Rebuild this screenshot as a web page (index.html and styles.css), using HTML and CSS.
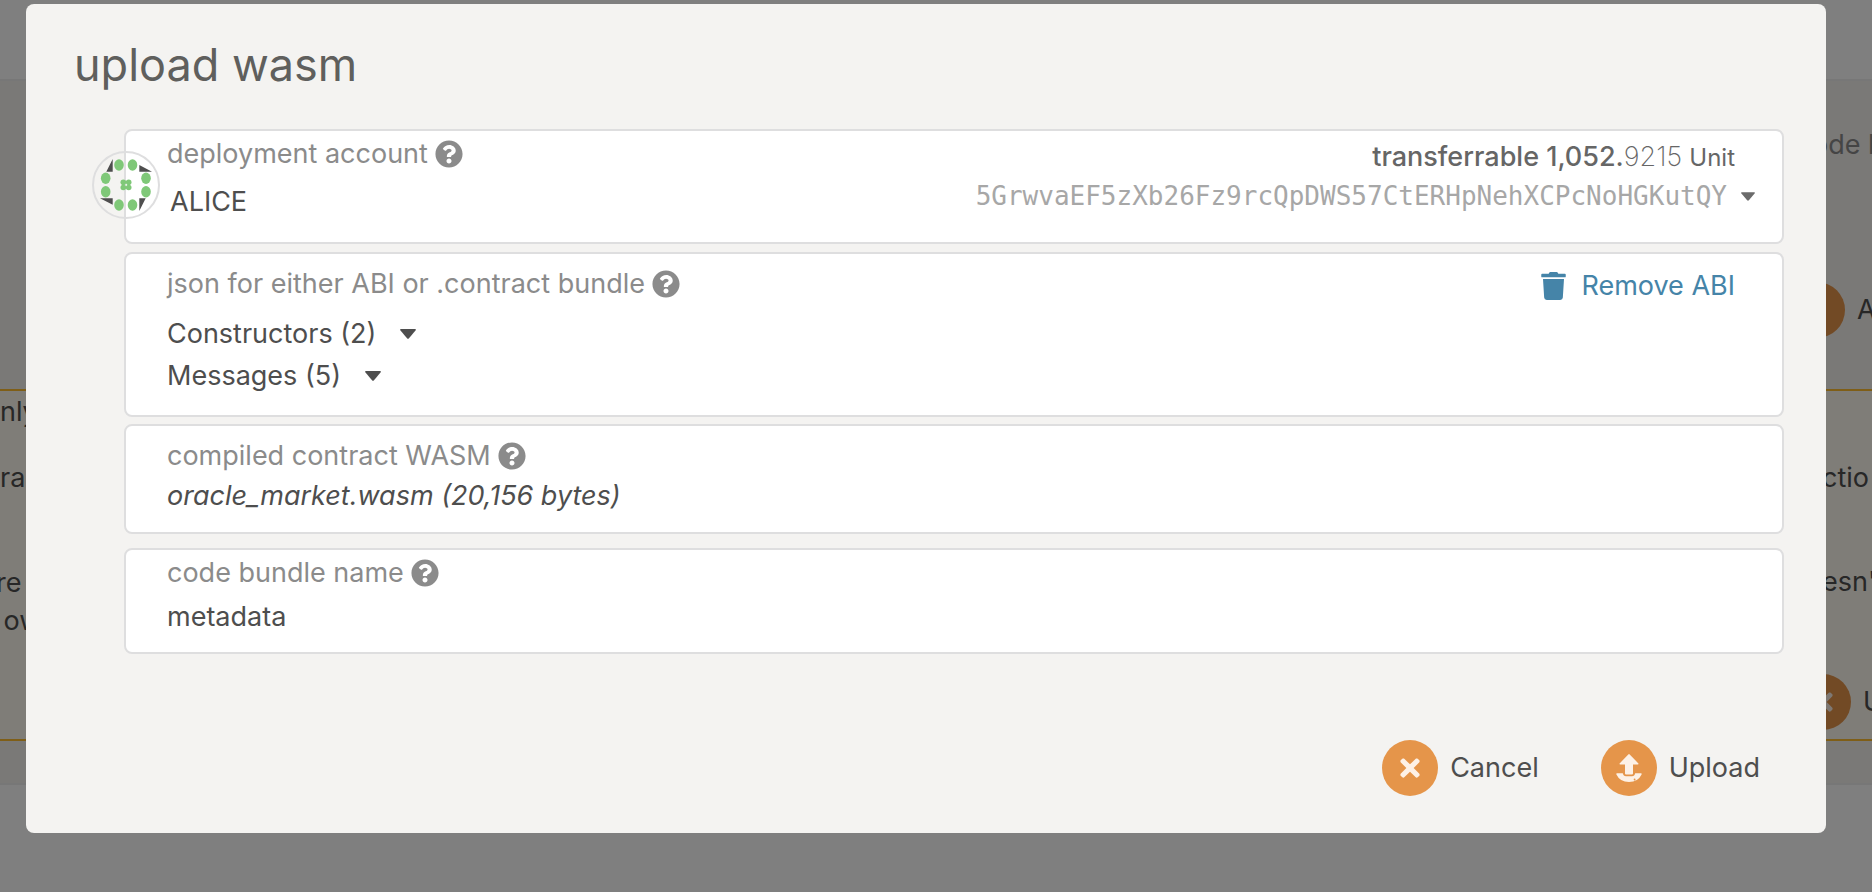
FILE: index.html
```html
<!DOCTYPE html>
<html lang="en">
<head>
<meta charset="utf-8">
<title>upload wasm</title>
<link rel="stylesheet" href="styles.css">
</head>
<body>
<svg class="sprite" aria-hidden="true">
  <symbol id="help" viewBox="0 0 512 512"><path d="M504 256c0 137-111 248-248 248S8 393 8 256C8 119 119 8 256 8s248 111 248 248zM262.700 90c-54.500 0-89.300 23-116.500 63.800-3.500 5.300-2.400 12.400 2.700 16.300l34.700 26.300c5.200 3.900 12.600 3 16.700-2.100 17.900-22.700 30.100-35.800 57.300-35.800 20.400 0 45.700 13.100 45.700 33 0 15-12.400 22.700-32.500 34C247.100 238.500 216 254.900 216 296v4c0 6.600 5.400 12 12 12h56c6.600 0 12-5.400 12-12v-1.300c0-28.500 83.200-29.600 83.200-106.700 0-58-60.200-102-116.500-102zM256 338c-25.400 0-46 20.600-46 46s20.600 46 46 46 46-20.600 46-46-20.600-46-46-46z"/></symbol>
  <symbol id="caret" viewBox="0 0 16 10"><path d="M1 0h14q1.500 0 .5 1.500L9 9.300q-1 1-2 0L.5 1.500Q-.5 0 1 0z"/></symbol>
  <symbol id="times" viewBox="0 0 352 512"><path d="M242.720 256l100.070-100.070c12.280-12.280 12.280-32.190 0-44.480l-22.240-22.240c-12.280-12.280-32.190-12.280-44.480 0L176 189.280 75.930 89.210c-12.280-12.280-32.190-12.280-44.480 0L9.210 111.450c-12.280 12.280-12.280 32.190 0 44.480L109.280 256 9.210 356.070c-12.280 12.280-12.280 32.190 0 44.480l22.240 22.240c12.280 12.280 32.200 12.280 44.480 0L176 322.720l100.070 100.070c12.280 12.280 32.200 12.280 44.480 0l22.240-22.240c12.280-12.280 12.280-32.190 0-44.480L242.720 256z"/></symbol>
</svg>

<div class="page" aria-hidden="true">
  <div class="band top"></div>
  <div class="band head"><span></span><span class="edge muted">ode h</span></div>
  <div class="band action"><span></span><span class="edge"><i class="disc"></i>A</span></div>
  <div class="notes">
    <div class="band note"><span>nly</span><span class="edge"></span></div>
    <div class="band note"><span>ra</span><span class="edge">ctio</span></div>
    <div class="band note outdent"><span>re<br>&nbsp;ow</span><span class="edge">esn'</span></div>
    <div class="band note"><span></span><span class="edge wide"><i class="disc"><svg class="times"><use href="#times"/></svg></i>U</span></div>
  </div>
</div>

<div class="dimmer">
<main class="modal" role="dialog" aria-labelledby="title">
  <h1 class="title" id="title">upload wasm</h1>
  <form class="fields">
    <section class="field account">
      <svg class="identicon" viewBox="0 0 68 68" aria-hidden="true">
        <circle class="ring" cx="34" cy="34" r="33"/>
        <g class="dark"><path d="M20.700 8v12.700h-6.400zM47.300 14v6.700H60zM8 47.300h12.700v6.400zM47.300 47.300h6.400L47.300 60z"/></g>
        <g class="green">
          <ellipse cx="27" cy="14" rx="4.800" ry="5.700"/><ellipse cx="40.500" cy="14" rx="4.800" ry="5.700"/>
          <ellipse cx="13.700" cy="27.300" rx="4.800" ry="5.700"/><ellipse cx="54" cy="27.300" rx="4.800" ry="5.700"/>
          <ellipse cx="13.700" cy="40.700" rx="4.800" ry="5.700"/><ellipse cx="54" cy="40.700" rx="4.800" ry="5.700"/>
          <ellipse cx="27" cy="54" rx="4.800" ry="5.700"/><ellipse cx="40.500" cy="54" rx="4.800" ry="5.700"/>
          <circle cx="31.300" cy="31.300" r="2.800"/><circle cx="36.700" cy="31.300" r="2.800"/><circle cx="31.300" cy="36.500" r="2.800"/><circle cx="36.700" cy="36.500" r="2.800"/>
        </g>
      </svg>
      <div class="stack">
        <label class="label" for="account">deployment account <svg class="help"><use href="#help"/></svg></label>
        <input class="input name" id="account" value="ALICE">
      </div>
      <div class="side">
        <div class="balance">transferrable 1,052.<span class="frac">9215</span> <span class="unit">Unit</span></div>
        <button class="address" type="button">5GrwvaEF5zXb26Fz9rcQpDWS57CtERHpNehXCPcNoHGKutQY <svg class="caret small"><use href="#caret"/></svg></button>
      </div>
    </section>
    <section class="field abi">
      <div class="stack">
        <div class="label">json for either ABI or .contract bundle <svg class="help"><use href="#help"/></svg></div>
        <button class="expander" type="button">Constructors (2) <svg class="caret"><use href="#caret"/></svg></button>
        <button class="expander" type="button">Messages (5) <svg class="caret"><use href="#caret"/></svg></button>
      </div>
      <button class="remove" type="button"><svg class="trash" viewBox="0 0 448 512"><path d="M432 32H312l-9.400-18.700A24 24 0 0 0 281.100 0H166.800a23.720 23.720 0 0 0-21.400 13.300L136 32H16A16 16 0 0 0 0 48v32a16 16 0 0 0 16 16h416a16 16 0 0 0 16-16V48a16 16 0 0 0-16-16zM53.200 467a48 48 0 0 0 47.900 45h245.800a48 48 0 0 0 47.900-45L416 128H32z"/></svg>Remove ABI</button>
    </section>
    <section class="field wasm">
      <div class="stack">
        <div class="label">compiled contract WASM <svg class="help"><use href="#help"/></svg></div>
        <button class="file" type="button">oracle_market.wasm (20,156 bytes)</button>
      </div>
    </section>
    <section class="field bundle">
      <div class="stack">
        <label class="label" for="bundle">code bundle name <svg class="help"><use href="#help"/></svg></label>
        <input class="input" id="bundle" value="metadata">
      </div>
    </section>
  </form>
  <footer class="actions">
    <button class="action-btn" type="button"><span class="disc"><svg class="times"><use href="#times"/></svg></span>Cancel</button>
    <button class="action-btn" type="button"><span class="disc"><svg class="up" viewBox="0 0 26 28"><path d="M12.300.4q.7-.7 1.400 0l8.500 8.800q1 1.300-.6 1.300H17v9q0 1-1 1h-6q-1 0-1-1v-9H4.400q-1.600 0-.6-1.300z"/><path fill-rule="evenodd" d="M1 19.300h5.800q.6 3 3.200 3h6q2.600 0 3.200-3H25q1 0 .6 1.200Q22 28 13 28T.4 20.500Q0 19.300 1 19.300zM17.700 25.500a.9.900 0 1 0 1.800 0 .9.900 0 1 0-1.800 0z"/></svg></span>Upload</button>
  </footer>
</main>
</div>
</body>
</html>
```
FILE: styles.css
```css
* { box-sizing: border-box; }
body {
  margin: 0;
  min-height: 100vh;
  overflow: hidden;
  background: #fff;
  color: #4e4e4e;
  font: 400 27px/36px Inter, "Liberation Sans", sans-serif;
}
button, input {
  margin: 0;
  padding: 0;
  border: 0;
  background: none;
  color: inherit;
  font: inherit;
  text-align: left;
}
svg { flex: none; fill: currentColor; }
.sprite { position: absolute; width: 0; height: 0; }

.page { position: absolute; inset: 0; overflow: hidden; }
.band { display: flex; justify-content: space-between; white-space: nowrap; }
.edge { display: flex; align-items: center; gap: 12px; width: 60px; height: 36px; }
.muted { color: #8b8b8b; }
.top { height: 81px; border-bottom: 2px solid #eee; }
.head { height: 200px; padding-top: 46px; background: #f5f2ef; }
.action { height: 108px; padding-top: 11px; background: #f5f2ef; }
.action .edge { width: 83px; }
.notes { border: solid #ffbd2e; border-width: 2px 0; background: #fffaf0; box-shadow: 0 42px #f5f2ef, 0 44px #eee; }
.note { height: 66px; padding-top: 3px; }
.note .edge { width: 50px; }
.note:nth-child(2) { height: 104px; }
.outdent { height: 123px; margin-left: -4px; line-height: 38px; }
.note:last-child { height: 55px; padding: 0; }
.note .wide { width: 77px; }

.dimmer { position: relative; min-height: 100vh; padding: 4px 46px 0 26px; background: rgba(0, 0, 0, .5); }
.modal { padding: 33px 42px 37px 48px; border-radius: 8px; background: #f4f3f1; }
.title { margin: 0 0 36px; color: #5f5f5d; font-size: 45px; font-weight: 400; line-height: 56px; }
.fields { display: grid; margin-left: 50px; }
.field {
  position: relative;
  display: flex;
  justify-content: space-between;
  padding: 0 47px 0 41px;
  border: 2px solid #dededf;
  border-radius: 8px;
  background: #fff;
}
.stack { display: flex; flex-direction: column; align-items: flex-start; }
.label { display: flex; align-items: center; gap: 7px; color: #8b8b8b; }
.help { width: 28px; height: 28px; }
.account { min-height: 115px; padding-top: 5px; margin-bottom: 8px; }
.account .input { margin-top: 12px; padding-left: 3px; }
.identicon { position: absolute; top: 20px; left: -34px; width: 68px; height: 68px; }
.ring { fill: none; stroke: #dededf; stroke-width: 2; }
.dark { fill: #4e4e4e; }
.green { fill: #7fc878; }
.side { display: flex; flex-direction: column; align-items: flex-end; padding-top: 3px; }
.balance { color: #666; font-weight: 500; }
.frac { font-weight: 200; }
.unit { font-size: 24px; font-weight: 400; }
.address { display: flex; align-items: center; gap: 14px; margin: 2px -20px 0 0; color: #a7a7a7; font-family: "DejaVu Sans Mono", monospace; font-size: 26px; }
.caret { width: 16px; height: 10px; }
.small { width: 14px; height: 9px; color: #6b6b6b; }
.abi { padding-top: 12px; padding-bottom: 18px; margin-bottom: 7px; }
.abi .label { margin-bottom: 11px; }
.expander { display: flex; align-items: center; gap: 24px; height: 42px; }
.remove { display: flex; gap: 15px; align-items: center; height: 40px; color: #4584a8; }
.trash { width: 25px; height: 28px; }
.wasm { min-height: 110px; padding-top: 12px; margin-bottom: 14px; }
.wasm .file { margin-top: 4px; font-style: italic; }
.bundle { min-height: 106px; padding-top: 5px; }
.bundle .input { margin-top: 8px; }
.actions { display: flex; justify-content: flex-end; gap: 62px; margin-top: 86px; padding-right: 24px; }
.action-btn { display: flex; align-items: center; gap: 12px; }
.disc { display: flex; flex: none; align-items: center; justify-content: center; width: 56px; height: 56px; border-radius: 50%; background: #e5954a; color: #fdf1e6; }
.times { width: 20px; height: 28px; }
.up { width: 26px; height: 28px; }
```
